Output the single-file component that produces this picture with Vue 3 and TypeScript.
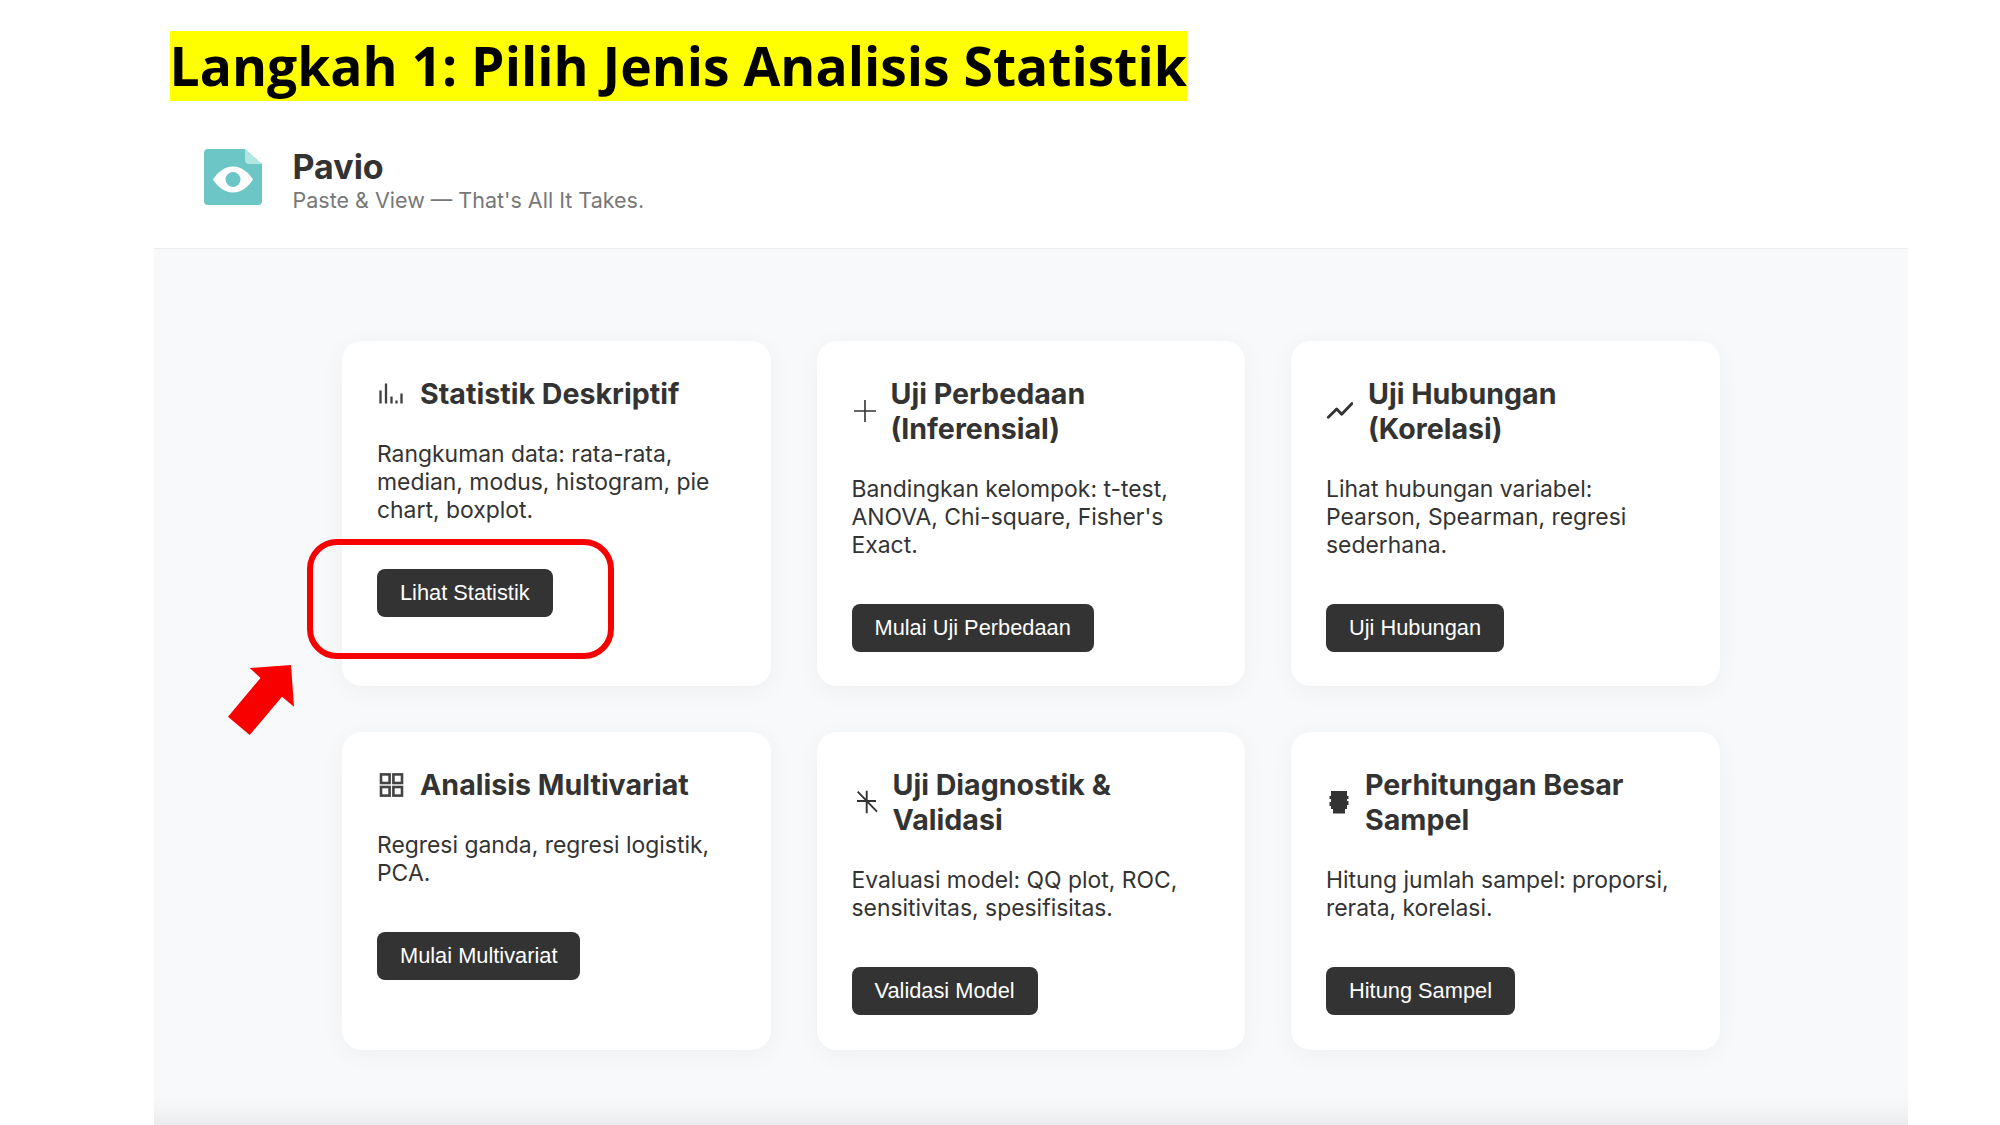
<script setup lang="ts">
interface Card { title: string; desc: string; btn: string; iw: number; icon: string }
const cards: Card[] = [
  { title: 'Statistik Deskriptif', desc: 'Rangkuman data: rata-rata, median, modus, histogram, pie chart, boxplot.', btn: 'Lihat Statistik', iw: 28, icon: 'bars' },
  { title: 'Uji Perbedaan (Inferensial)', desc: "Bandingkan kelompok: t-test, ANOVA, Chi-square, Fisher's Exact.", btn: 'Mulai Uji Perbedaan', iw: 24, icon: 'plus' },
  { title: 'Uji Hubungan (Korelasi)', desc: 'Lihat hubungan variabel: Pearson, Spearman, regresi sederhana.', btn: 'Uji Hubungan', iw: 27, icon: 'trend' },
  { title: 'Analisis Multivariat', desc: 'Regresi ganda, regresi logistik, PCA.', btn: 'Mulai Multivariat', iw: 28, icon: 'grid' },
  { title: 'Uji Diagnostik & Validasi', desc: 'Evaluasi model: QQ plot, ROC, sensitivitas, spesifisitas.', btn: 'Validasi Model', iw: 26, icon: 'star' },
  { title: 'Perhitungan Besar Sampel', desc: 'Hitung jumlah sampel: proporsi, rerata, korelasi.', btn: 'Hitung Sampel', iw: 24, icon: 'blob' },
]
</script>

<template>
  <div class="page">
    <div class="banner"><h1 class="banner-text">Langkah 1: Pilih Jenis Analisis Statistik</h1></div>

    <header class="brand">
      <svg class="logo" width="58" height="56" viewBox="0 0 58 56" aria-hidden="true">
        <path d="M4 0H41L58 15V52a4 4 0 0 1-4 4H4a4 4 0 0 1-4-4V4a4 4 0 0 1 4-4Z" fill="#6dc6c6" />
        <path d="M41 0L58 15H45a4 4 0 0 1-4-4Z" fill="#b3e5e3" />
        <path d="M9 30.5C13.5 23.5 20.5 17.5 29 17.5S44.500 23.500 49 30.5C44.500 37.500 37.500 43.500 29 43.500S13.500 37.500 9 30.500Z" fill="#fff" />
        <circle cx="29" cy="30.5" r="7.500" fill="#6dc6c6" />
      </svg>
      <div class="brand-text">
        <div class="brand-name">Pavio</div>
        <div class="brand-tag">Paste &amp; View — That's All It Takes.</div>
      </div>
    </header>

    <main class="panel">
      <section class="grid">
        <article v-for="c in cards" :key="c.title" class="card">
          <div class="head">
            <svg class="ico" :width="c.iw" height="28" :viewBox="`0 0 ${c.iw} 28`" aria-hidden="true">
              <g v-if="c.icon === 'bars'" stroke="#3f3f3f" stroke-width="2.3" fill="none">
                <path d="M3.5 10.5V23.5M9 3.5V23.5M14.5 16.5V23.5M19.5 20.5V23.5M24.5 13.5V23.5" />
              </g>
              <g v-else-if="c.icon === 'plus'" stroke="#333" stroke-width="1.6" fill="none">
                <path d="M2 14H24M13 3V25" />
              </g>
              <g v-else-if="c.icon === 'trend'" stroke="#333" stroke-width="2.8" stroke-linecap="round" stroke-linejoin="round" fill="none">
                <path d="M2.3 20.3L10.7 12L15.7 17.3L26 6.5" />
              </g>
              <g v-else-if="c.icon === 'grid'" stroke="#444" stroke-width="2.6" fill="none">
                <rect x="4" y="3.4" width="8.6" height="8.6" />
                <rect x="16.4" y="3.4" width="8.6" height="8.6" />
                <rect x="4" y="16" width="8.6" height="8.6" />
                <rect x="16.4" y="16" width="8.6" height="8.6" />
              </g>
              <g v-else-if="c.icon === 'star'" stroke="#333" stroke-width="1.9" fill="none">
                <path d="M14.7 2.7V25.3M5 13H24M5.7 3.7L25 23.7" />
              </g>
              <path v-else d="M5 3H21V8H22.5V11H21V13H22.5V17H21V21H19V25.5H7V21H5V18H3.5V14H5V11H3.5V8H5Z" fill="#333" />
            </svg>
            <h2 class="title">{{ c.title }}</h2>
          </div>
          <p class="desc">{{ c.desc }}</p>
          <button class="btn" type="button">{{ c.btn }}</button>
        </article>
      </section>
    </main>

    <div class="callout" aria-hidden="true"></div>
    <svg class="arrow" width="70" height="75" viewBox="225 662 70 75" aria-hidden="true">
      <path d="M249.7 668L291 665L294 706.7L282 696.7L249.7 735L228 716.7L260.5 678Z" fill="#f90000" />
    </svg>
  </div>
</template>

<style scoped>
.page {
  position: relative;
  width: 2000px;
  height: 1125px;
  overflow: hidden;
  background: #fff;
  font-family: Inter, "Liberation Sans", sans-serif;
  color: #333;
}
.banner {
  display: flex;
  padding: 31px 0 0 169.5px;
}
.banner-text {
  margin: 0;
  width: 1017px;
  height: 70px;
  background: #ffff00;
  color: #000;
  font-family: "Open Sans", sans-serif;
  font-size: 53.4px;
  font-weight: 700;
  line-height: 70px;
  text-align: center;
  white-space: nowrap;
}
.brand {
  display: flex;
  align-items: center;
  gap: 30.5px;
  height: 147px;
  box-sizing: border-box;
  padding: 5px 0 0 204px;
}
.logo { flex: none; }
.brand-text {
  display: flex;
  flex-direction: column;
  margin-top: 4px;
}
.brand-name {
  font-size: 34px;
  font-weight: 700;
  line-height: 41px;
  color: #333;
}
.brand-tag {
  font-size: 21.5px;
  line-height: 26px;
  color: #777;
}
.panel {
  width: 1753.5px;
  height: 877px;
  margin-left: 154px;
  padding: 92px 0 0 188px;
  box-sizing: border-box;
  background: #f8f9fb;
  border-top: 1px solid #eeeef0;
  box-shadow: inset 0 -30px 30px -26px rgba(0, 0, 0, 0.09);
}
.grid {
  display: grid;
  grid-template-columns: repeat(3, 428.5px);
  grid-template-rows: 345px 318px;
  gap: 46px;
  align-items: stretch;
}
.card {
  display: flex;
  flex-direction: column;
  align-items: flex-start;
  padding: 35px 35px 0;
  background: #fff;
  border-radius: 20px;
  box-shadow: 0 5px 26px rgba(0, 0, 0, 0.045);
}
.head {
  display: flex;
  align-items: center;
  gap: 15px;
  margin-bottom: 29px;
}
.ico { flex: none; }
.title {
  margin: 0;
  font-size: 28.6px;
  font-weight: 700;
  line-height: 35px;
  color: #333;
}
.desc {
  margin: 0 0 45px;
  font-size: 22.9px;
  line-height: 28px;
  color: #333;
}
.btn {
  height: 48px;
  padding: 0 23px;
  border: 0;
  border-radius: 8px;
  background: #333;
  color: #fff;
  font-family: "Liberation Sans", Arial, sans-serif;
  font-size: 21.8px;
}
.callout {
  position: absolute;
  left: 306.5px;
  top: 539px;
  width: 307.5px;
  height: 120px;
  box-sizing: border-box;
  border: 6px solid #f60000;
  border-radius: 30px;
}
.arrow {
  position: absolute;
  left: 225px;
  top: 662px;
}
</style>
